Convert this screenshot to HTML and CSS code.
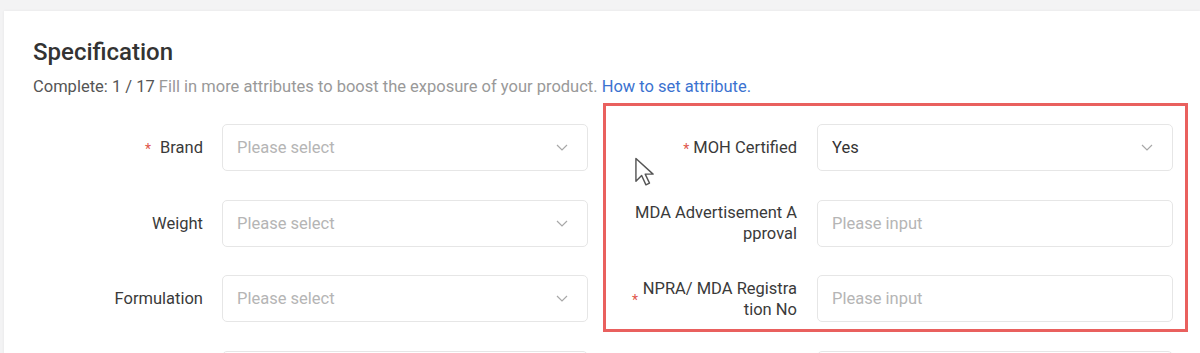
FILE: index.html
```html
<!DOCTYPE html>
<html lang="en">
<head>
  <meta charset="UTF-8">
  <title>Specification</title>
  <link rel="stylesheet" href="styles.css">
</head>
<body>
  <div class="card">
    <h2 class="title">Specification</h2>
    <p class="subtitle">
      <span class="count">Complete: 1 / 17</span>
      Fill in more attributes to boost the exposure of your product.
      <a href="#" class="link">How to set attribute.</a>
    </p>

    <div class="form">
      <!-- row 1 -->
      <div class="item">
        <label class="label"><span class="req">*</span><span class="text">Brand</span></label>
        <div class="control select"><span class="placeholder">Please select</span><svg class="chevron" viewBox="0 0 12 7"><path d="M1 1l5 5 5-5"/></svg></div>
      </div>
      <div class="item item-right">
        <label class="label"><span class="req">*</span><span class="text">MOH Certified</span></label>
        <div class="control select"><span class="value">Yes</span><svg class="chevron" viewBox="0 0 12 7"><path d="M1 1l5 5 5-5"/></svg></div>
      </div>

      <!-- row 2 -->
      <div class="item">
        <label class="label"><span class="text">Weight</span></label>
        <div class="control select"><span class="placeholder">Please select</span><svg class="chevron" viewBox="0 0 12 7"><path d="M1 1l5 5 5-5"/></svg></div>
      </div>
      <div class="item item-right">
        <label class="label"><span class="text">MDA Advertisement Approval</span></label>
        <div class="control"><span class="placeholder">Please input</span></div>
      </div>

      <!-- row 3 -->
      <div class="item">
        <label class="label"><span class="text">Formulation</span></label>
        <div class="control select"><span class="placeholder">Please select</span><svg class="chevron" viewBox="0 0 12 7"><path d="M1 1l5 5 5-5"/></svg></div>
      </div>
      <div class="item item-right">
        <label class="label"><span class="req">*</span><span class="text">NPRA/ MDA Registration No</span></label>
        <div class="control"><span class="placeholder">Please input</span></div>
      </div>

      <!-- row 4, only its top edge is in view -->
      <div class="item">
        <label class="label"></label>
        <div class="control"></div>
      </div>
      <div class="item item-right">
        <label class="label"></label>
        <div class="control"></div>
      </div>

      <!-- annotation box drawn over the right column -->
      <div class="highlight"></div>

      <svg class="cursor" viewBox="0 0 14 21">
        <path d="M1 1v16l4-4 3 6.5 2.5-1.2-3-6.3h5.5z"/>
      </svg>
    </div>
  </div>
</body>
</html>
```

FILE: styles.css
```css
* {
  box-sizing: border-box;
}
body {
  margin: 0;
  height: 353px;
  background: #f3f3f4;
  font-family: Roboto, "Liberation Sans", sans-serif;
  color: #333;
  overflow: hidden;
}
.card {
  margin: 11px 0 0 4px;
  height: 400px;
  background: #fff;
  padding: 27px 29px 0;
  box-shadow: 0 0 3px rgba(0, 0, 0, 0.06);
}
.title {
  margin: 0;
  font-size: 24px;
  line-height: 28px;
  font-weight: 500;
  color: #333;
}
.subtitle {
  margin: 10px 0 0;
  font-size: 16.5px;
  line-height: 21px;
  color: #999;
}
.count {
  color: #555;
}
.link {
  color: #3b72d0;
  text-decoration: none;
}
.form {
  position: relative;
  margin-top: 27px;
  display: grid;
  grid-template-columns: 555px 541px;
  column-gap: 44px;
  row-gap: 28.7px;
}
.item {
  display: flex;
  align-items: center;
  gap: 19px;
}
.label {
  width: 170px;
  flex: none;
  display: flex;
  align-items: center;
  justify-content: flex-end;
  gap: 9px;
  font-size: 16.5px;
  line-height: 21px;
  color: #3a3a3a;
}
.item-right {
  gap: 20px;
}
.item-right .label {
  width: 165px;
  gap: 4px;
}
.text {
  text-align: right;
  word-break: break-all;
}
.req {
  color: #e0574c;
  font-size: 14px;
  line-height: 14px;
  padding-top: 3px;
}
.control {
  flex: 1;
  height: 47px;
  border: 1px solid #e6e6e6;
  border-radius: 5px;
  display: flex;
  align-items: center;
  justify-content: space-between;
  padding: 0 16px 0 14px;
  font-size: 16.5px;
}
.placeholder {
  color: #b5b5b5;
}
.value {
  color: #333;
}
.chevron {
  width: 12px;
  height: 7px;
  fill: none;
  stroke: #a8a8a8;
  stroke-width: 1.2;
  margin-right: 3px;
}
.highlight {
  position: absolute;
  left: 570px;
  top: -21px;
  width: 585px;
  height: 229px;
  border: 3px solid #e9605e;
  pointer-events: none;
}
.cursor {
  position: absolute;
  left: 601px;
  top: 33px;
  width: 21px;
  height: 30px;
  fill: #fff;
  stroke: #555;
  stroke-width: 1;
  stroke-linejoin: round;
}
```
